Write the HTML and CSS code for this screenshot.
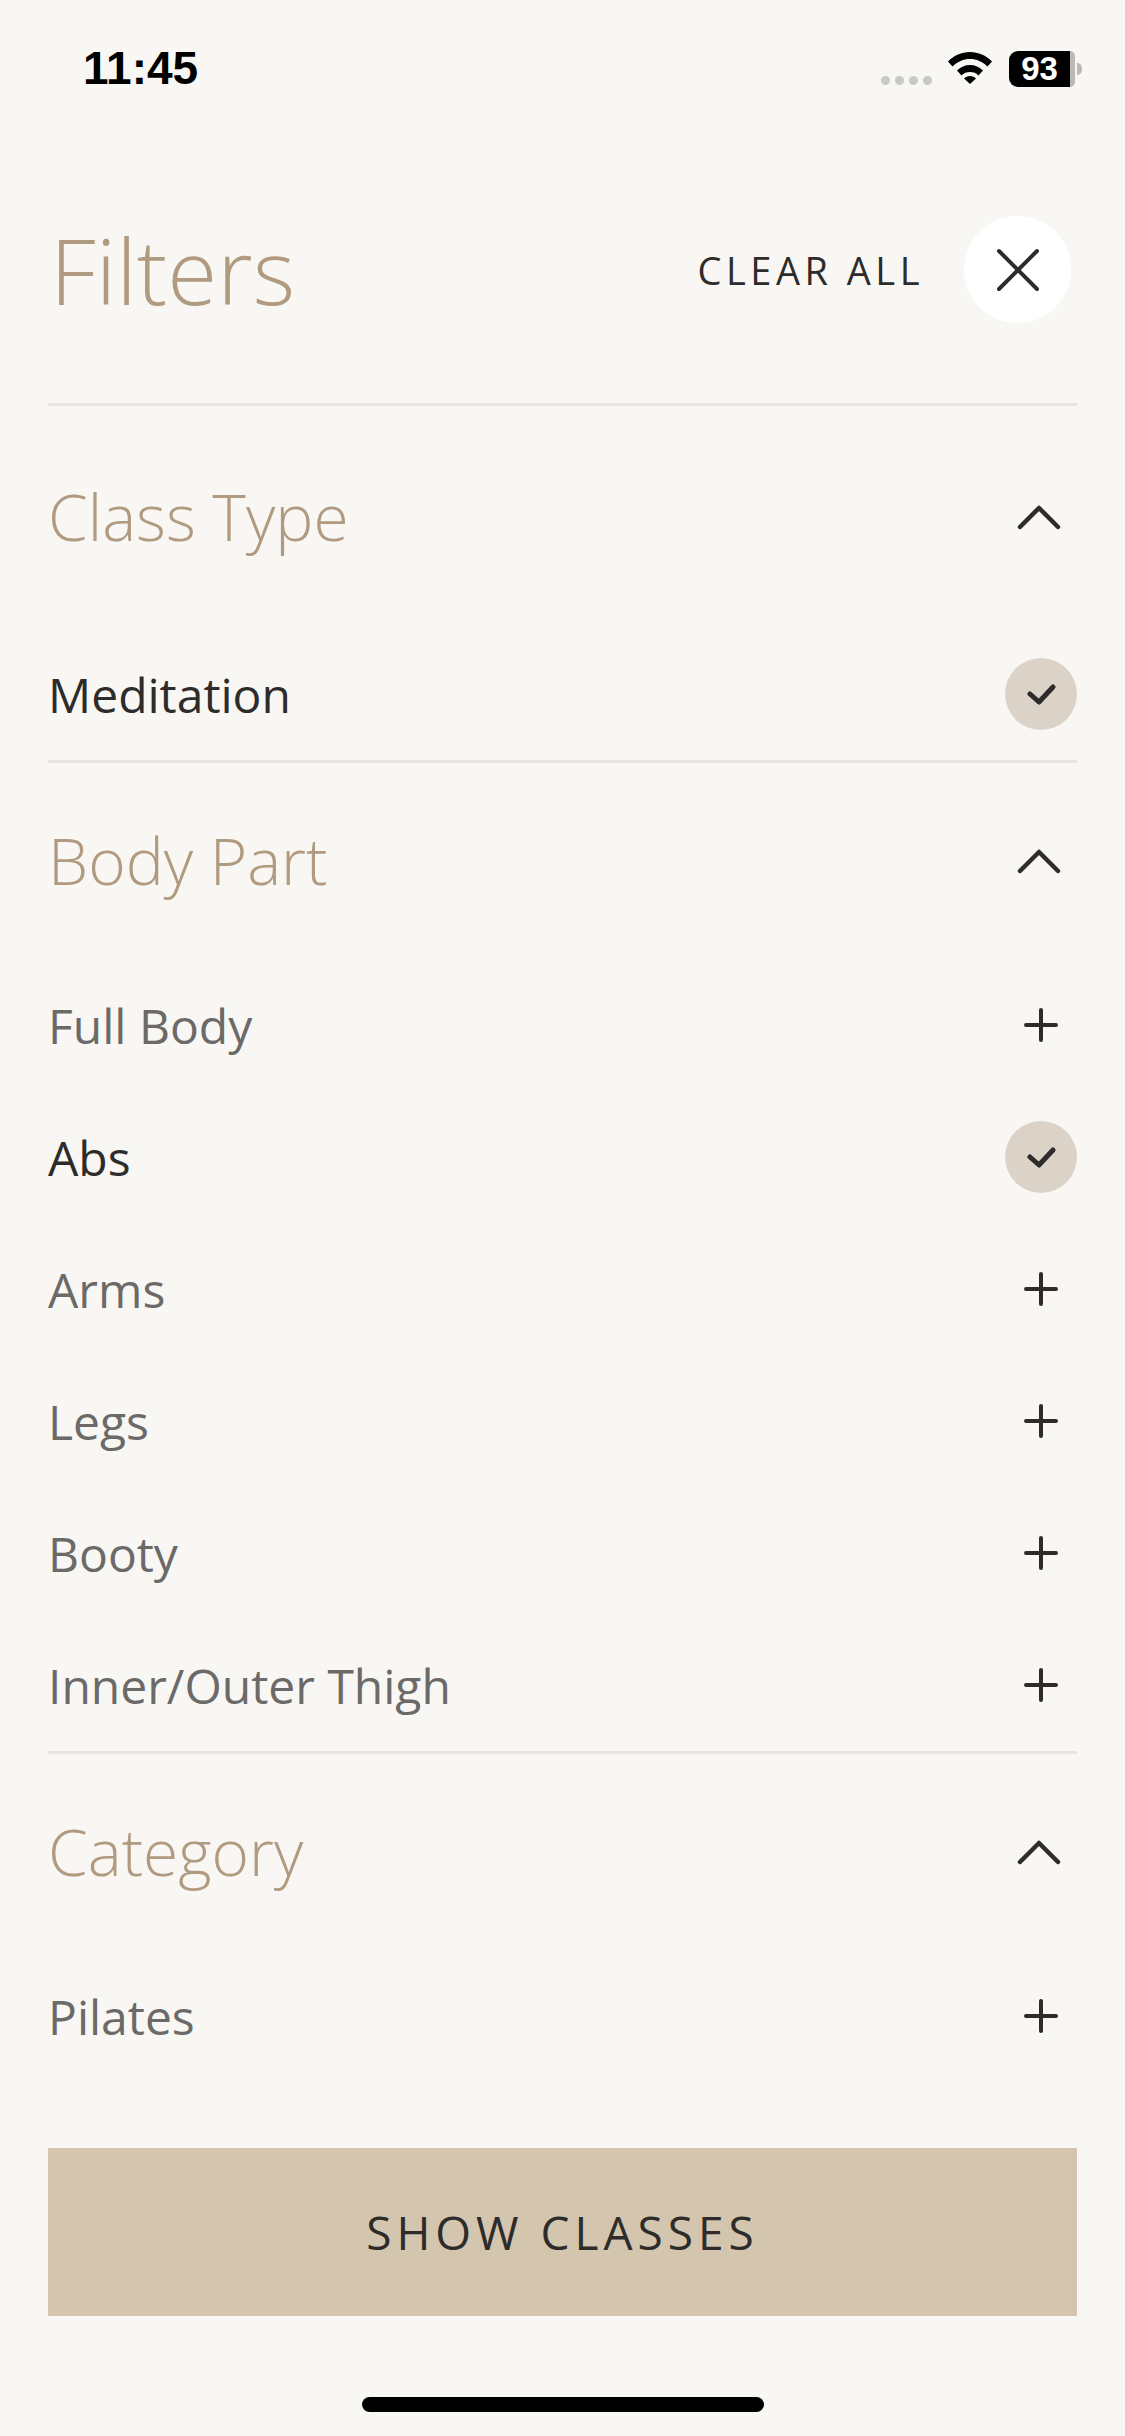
FILE: index.html
```html
<!DOCTYPE html>
<html lang="en">
<head>
    <meta charset="UTF-8">
    <title>Filters</title>
    <link rel="stylesheet" href="styles.css">
</head>
<body>
    <div class="status">
        <span class="time">11:45</span>
        <div class="status-icons">
            <div class="dots"><i></i><i></i><i></i><i></i></div>
            <svg class="wifi" width="46" height="33" viewBox="0 0 46 33"><path d="M1 10.5C7 4.5 14.500 1 23 1s16 3.500 22 9.500l-4.500 5C35.500 10.500 29.500 8 23 8S10.500 10.500 5.500 15.500z"/><path d="M10 19.500C13.500 16 18 14 23 14s9.500 2 13 5.500l-4.500 5C29.500 22 26.500 21 23 21s-6.500 1-8.500 3.500z"/><path d="M17 27.500c1.500-1.500 3.500-2.500 6-2.500s4.500 1 6 2.500L23 33z"/></svg>
            <div class="battery"><span class="battery-level">93</span><span class="battery-rest"></span><span class="battery-nub"></span></div>
        </div>
    </div>

    <header class="top">
        <h1>Filters</h1>
        <div class="top-actions">
            <span class="clear">CLEAR ALL</span>
            <span class="close">
                <svg width="44" height="44" viewBox="0 0 44 44"><path d="M3 3l38 38M41 3L3 41"/></svg>
            </span>
        </div>
    </header>

    <section class="group first">
        <div class="group-head">
            <h2>Class Type</h2>
            <svg class="chev" width="44" height="26" viewBox="0 0 44 26"><path d="M3 23L22 4l19 19"/></svg>
        </div>
        <div class="row on">
            <span>Meditation</span>
            <span class="tick"><svg width="30" height="24" viewBox="0 0 30 24"><path d="M4 12l9 8L27 5"/></svg></span>
        </div>
    </section>

    <section class="group">
        <div class="group-head">
            <h2>Body Part</h2>
            <svg class="chev" width="44" height="26" viewBox="0 0 44 26"><path d="M3 23L22 4l19 19"/></svg>
        </div>
        <div class="row">
            <span>Full Body</span>
            <svg class="plus" width="34" height="34" viewBox="0 0 34 34"><path d="M17 2v30M2 17h30"/></svg>
        </div>
        <div class="row on">
            <span>Abs</span>
            <span class="tick"><svg width="30" height="24" viewBox="0 0 30 24"><path d="M4 12l9 8L27 5"/></svg></span>
        </div>
        <div class="row">
            <span>Arms</span>
            <svg class="plus" width="34" height="34" viewBox="0 0 34 34"><path d="M17 2v30M2 17h30"/></svg>
        </div>
        <div class="row">
            <span>Legs</span>
            <svg class="plus" width="34" height="34" viewBox="0 0 34 34"><path d="M17 2v30M2 17h30"/></svg>
        </div>
        <div class="row">
            <span>Booty</span>
            <svg class="plus" width="34" height="34" viewBox="0 0 34 34"><path d="M17 2v30M2 17h30"/></svg>
        </div>
        <div class="row">
            <span>Inner/Outer Thigh</span>
            <svg class="plus" width="34" height="34" viewBox="0 0 34 34"><path d="M17 2v30M2 17h30"/></svg>
        </div>
    </section>

    <section class="group">
        <div class="group-head">
            <h2>Category</h2>
            <svg class="chev" width="44" height="26" viewBox="0 0 44 26"><path d="M3 23L22 4l19 19"/></svg>
        </div>
        <div class="row">
            <span>Pilates</span>
            <svg class="plus" width="34" height="34" viewBox="0 0 34 34"><path d="M17 2v30M2 17h30"/></svg>
        </div>
    </section>

    <button class="show">SHOW CLASSES</button>
    <div class="home-bar"></div>
</body>
</html>
```

FILE: styles.css
```css
body {
    margin: 0;
    width: 1125px;
    height: 2436px;
    overflow: hidden;
    background-color: #f9f7f4;
    color: #2d2c2a;
    font-family: "Open Sans", sans-serif;
    display: flex;
    flex-direction: column;
}
svg path {
    fill: none;
    stroke: #2d2c2a;
    stroke-linecap: round;
    stroke-linejoin: round;
}

/* status bar */
.status {
    height: 136px;
    padding: 0 43px 0 83px;
    display: flex;
    justify-content: space-between;
    align-items: flex-start;
}
.time {
    font-family: "Liberation Sans", sans-serif;
    font-weight: 700;
    font-size: 46px;
    line-height: 46px;
    margin-top: 45px;
    color: #000;
}
.status-icons {
    display: flex;
    align-items: flex-start;
    margin-top: 51px;
}
.dots {
    display: flex;
    gap: 5px;
    margin-top: 25px;
    margin-right: 15px;
}
.dots i {
    width: 9px;
    height: 9px;
    border-radius: 50%;
    background-color: #c9c8c5;
}
.wifi {
    margin-right: 16px;
}
.wifi path {
    fill: #000;
    stroke: none;
}
.battery {
    display: flex;
    align-items: center;
    height: 36px;
}
.battery-level {
    width: 61px;
    height: 36px;
    background-color: #000;
    color: #fff;
    border-radius: 9px 0 0 9px;
    font-family: "Liberation Sans", sans-serif;
    font-weight: 700;
    font-size: 33px;
    line-height: 36px;
    text-align: center;
}
.battery-rest {
    width: 5px;
    height: 36px;
    background-color: #bbbab7;
    border-radius: 0 7px 7px 0;
}
.battery-nub {
    width: 5px;
    height: 12px;
    margin-left: 2px;
    background-color: #bbbab7;
    border-radius: 0 6px 6px 0;
}

/* title */
.top {
    margin: 0 48px;
    height: 267px;
    display: flex;
    justify-content: space-between;
    align-items: center;
    padding-right: 6px;
    box-sizing: border-box;
}
h1 {
    margin: 0;
    font-weight: 300;
    font-size: 91px;
    line-height: 124px;
    color: #b09a80;
    padding-left: 2px;
}
.top-actions {
    display: flex;
    align-items: center;
    gap: 40px;
}
.clear {
    font-size: 38px;
    letter-spacing: 4.5px;
}
.close {
    width: 107px;
    height: 107px;
    border-radius: 50%;
    background-color: #fff;
    display: flex;
    align-items: center;
    justify-content: center;
}
.close path {
    stroke-width: 4;
}

/* filter groups */
.group {
    margin: 0 48px;
    border-top: 3px solid #e8e6e1;
}
.group-head {
    height: 196px;
    display: flex;
    justify-content: space-between;
    align-items: center;
}
.group.first .group-head {
    height: 222px;
}
h2 {
    margin: 0;
    font-weight: 300;
    font-size: 64px;
    line-height: 88px;
    color: #b09a80;
}
.chev {
    margin-right: 16px;
}
.chev path {
    stroke-width: 4.500;
}
.row {
    height: 132px;
    display: flex;
    justify-content: space-between;
    align-items: center;
    font-size: 48px;
    color: #6b6a68;
}
.row.on {
    color: #2d2c2a;
}
.plus {
    margin-right: 19px;
}
.plus path {
    stroke-width: 4;
}
.tick {
    width: 72px;
    height: 72px;
    border-radius: 50%;
    background-color: #dbd3c7;
    display: flex;
    align-items: center;
    justify-content: center;
}
.tick path {
    stroke-width: 5;
}

/* bottom */
.show {
    margin: 0 48px;
    position: absolute;
    top: 2148px;
    left: 0;
    width: 1029px;
    height: 168px;
    border: none;
    background-color: #d4c5ae;
    color: #2d2c2a;
    font-family: "Open Sans", sans-serif;
    font-size: 46px;
    letter-spacing: 5px;
}
.home-bar {
    position: absolute;
    top: 2397px;
    left: 362px;
    width: 402px;
    height: 15px;
    border-radius: 8px;
    background-color: #000;
}
```
